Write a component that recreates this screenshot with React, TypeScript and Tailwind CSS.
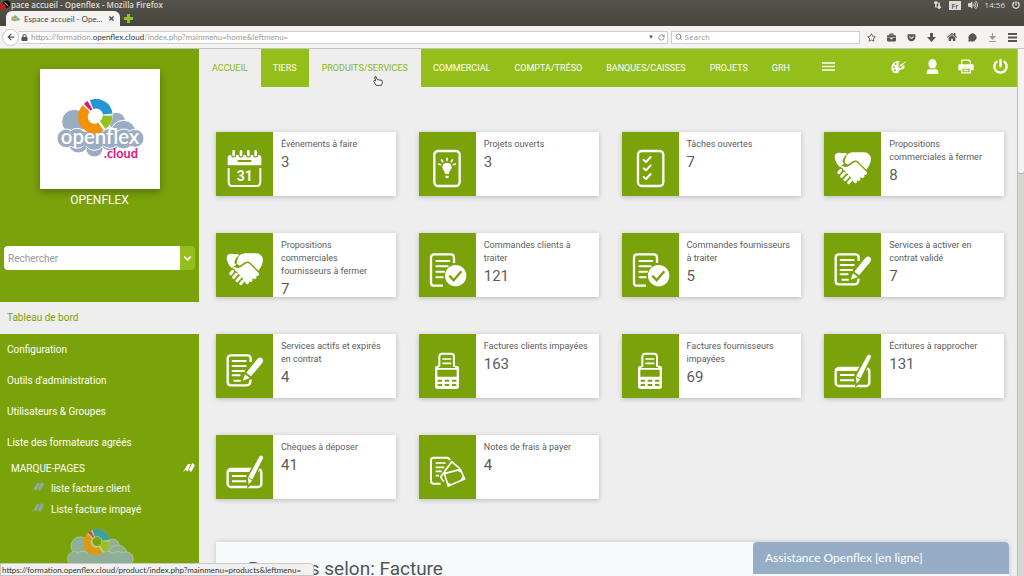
import React from 'react';
import {
  FaArrowLeft,
  FaBriefcase,
  FaGetPocket,
  FaHome,
  FaLock,
  FaPowerOff,
  FaRegStar,
  FaVolumeUp,
} from 'react-icons/fa';
import { ChevronDown, MessageCircle, RotateCw, Search, X } from 'lucide-react';

type IconName = 'calendar' | 'project' | 'tasks' | 'handshake' | 'order' | 'contract' | 'invoice' | 'cheque' | 'expense';

type Stat = { icon: IconName; label: string; value: number };

const stats: Stat[] = [
  { icon: 'calendar', label: 'Événements à faire', value: 3 },
  { icon: 'project', label: 'Projets ouverts', value: 3 },
  { icon: 'tasks', label: 'Tâches ouvertes', value: 7 },
  { icon: 'handshake', label: 'Propositions commerciales à fermer', value: 8 },
  { icon: 'handshake', label: 'Propositions commerciales fournisseurs à fermer', value: 7 },
  { icon: 'order', label: 'Commandes clients à traiter', value: 121 },
  { icon: 'order', label: 'Commandes fournisseurs à traiter', value: 5 },
  { icon: 'contract', label: 'Services à activer en contrat validé', value: 7 },
  { icon: 'contract', label: 'Services actifs et expirés en contrat', value: 4 },
  { icon: 'invoice', label: 'Factures clients impayées', value: 163 },
  { icon: 'invoice', label: 'Factures fournisseurs impayées', value: 69 },
  { icon: 'cheque', label: 'Écritures à rapprocher', value: 131 },
  { icon: 'cheque', label: 'Chèques à déposer', value: 41 },
  { icon: 'expense', label: 'Notes de frais à payer', value: 4 },
];

const topMenu = [
  { label: 'ACCUEIL', active: true },
  { label: 'TIERS', active: false },
  { label: 'PRODUITS/SERVICES', active: true },
  { label: 'COMMERCIAL', active: false },
  { label: 'COMPTA/TRÉSO', active: false },
  { label: 'BANQUES/CAISSES', active: false },
  { label: 'PROJETS', active: false },
  { label: 'GRH', active: false },
];

const sideMenu = ['Tableau de bord', 'Configuration', "Outils d'administration", 'Utilisateurs & Groupes', 'Liste des formateurs agréés'];

const GREEN = '#7aa20a';

const drawings: Record<IconName, React.ReactNode> = {
  calendar: (
    <>
      <path d="M35 100V78q0-9 9-9h83q9 0 9 9v22z" fill="#fff" />
      <g stroke={GREEN} strokeWidth="15" strokeLinecap="round">
        <path d="M53 60v9M75 60v9M97 60v9M119 60v9" />
      </g>
      <g stroke="#fff" strokeWidth="8" strokeLinecap="round">
        <path d="M53 58v11M75 58v11M97 58v11M119 58v11" />
      </g>
      <path d="M65 87h41" stroke={GREEN} strokeWidth="6" />
      <path d="M38 108v43q0 11 11 11h73q11 0 11-11v-43" fill="none" stroke="#fff" strokeWidth="6" />
      <text x="86" y="146" textAnchor="middle" fill="#fff" fontSize="42" fontWeight="700" fontFamily="Roboto, sans-serif">
        31
      </text>
    </>
  ),
  project: (
    <>
      <rect x="46" y="57" width="76" height="105" rx="11" fill="none" stroke="#fff" strokeWidth="7" />
      <path d="M84 92c-9 0-14 6-14 13 0 8 7 11 8 21h12c1-10 8-13 8-21 0-7-5-13-14-13z" fill="#fff" />
      <path d="M79 131h10v4q0 4-5 4t-5-4z" fill="#fff" />
      <path d="M84 79v6M68 84l3 5M100 84l-3 5M59 96l6 2M109 96l-6 2" stroke="#fff" strokeWidth="5" strokeLinecap="round" />
    </>
  ),
  tasks: (
    <g fill="none" stroke="#fff" strokeLinecap="round" strokeLinejoin="round">
      <rect x="48" y="57" width="76" height="105" rx="11" strokeWidth="7" />
      <path d="M65 84l7 6 14-15M65 109l7 6 14-15M65 135l7 6 14-15" strokeWidth="6" />
    </g>
  ),
  handshake: (
    <>
      <path d="M32 77q-1-14 12-15c6 0 14 2 18 1l8 2q-11 8-14 20-2 8 5 9l-13 12q-13-12-16-29z" fill="#fff" />
      <path
        d="M72 66q6-5 14-5h33q9 0 14 4 8 6 8 15-1 17-14 33L103 89q-8-7-17-1l-12 9q-8 2-12-6 2-18 10-25z"
        fill="#fff"
      />
      <path
        d="M78 100l13-9q5-3 10 2l27 27q3 5-1 8-4 2-7-1 4 6-1 10-4 3-9-1l-2-2q4 8-1 12-4 3-8-1l-4-5 4 5q2 6-3 8-4 2-7-2l-8-11q0-7-7-8-1-8-8-9-1-8-8-9-1-7-8-8l5-5q11 8 23-1z"
        fill="#fff"
      />
      <path d="M44 122l6-7M53 133l8-9M63 143l8-9M74 152l6-7" stroke="#fff" strokeWidth="9" strokeLinecap="round" />
    </>
  ),
  order: (
    <>
      <path d="M72 158H45q-9 0-9-9V74q0-10 10-10h49q10 0 10 10v16" fill="none" stroke="#fff" strokeWidth="7" />
      <path d="M52 84h39M52 100h34M52 116h23M52 133h19" stroke="#fff" strokeWidth="6" strokeLinecap="round" />
      <circle cx="110" cy="128" r="32" fill="#fff" />
      <path d="M91 128l13 14 23-27" fill="none" stroke={GREEN} strokeWidth="7" />
    </>
  ),
  contract: (
    <>
      <path
        d="M104 84V74q0-10-10-10H45q-10 0-10 10v70q0 10 10 10h48q10 0 11-17"
        fill="none"
        stroke="#fff"
        strokeWidth="7"
      />
      <path d="M50 81h39M50 96h39M50 111h34M50 124h21M55 140h17" stroke="#fff" strokeWidth="6" strokeLinecap="round" />
      <path d="M91 116l31-39q8-10 16-4 7 6-1 16l-32 38z" fill="#fff" />
      <path d="M87 121l14 11-21 8z" fill="#fff" />
    </>
  ),
  invoice: (
    <>
      <path d="M61 98V68q0-9 9-9h26q9 0 9 9v30" fill="none" stroke="#fff" strokeWidth="6" />
      <path d="M70 75h27M70 88h27" stroke="#fff" strokeWidth="5" />
      <path d="M48 103q0-8 8-8h3v7h49v-7h4q8 0 8 8v54q0 8-8 8H56q-8 0-8-8z" fill="#fff" />
      <path d="M55 107h58v21H55zM56 137h13v6H56zM77 137h14v6H77zM99 137h13v6H99zM56 150h13v6H56zM77 150h14v6H77zM99 150h13v6H99z" fill={GREEN} />
    </>
  ),
  cheque: (
    <>
      <rect x="35" y="102" width="101" height="54" rx="10" fill="none" stroke="#fff" strokeWidth="7" />
      <path d="M35 102h93v9H35z" fill="#fff" />
      <path d="M48 123h43M48 139h43" stroke="#fff" strokeWidth="6" />
      <path d="M93 128l34-63q5-9 13-4 6 4 2 12l-34 68-12 14z" fill="#fff" stroke={GREEN} strokeWidth="5" />
      <path d="M97 128l12 7" stroke={GREEN} strokeWidth="3" />
    </>
  ),
  expense: (
    <g fill="none" stroke="#fff" strokeLinejoin="round">
      <path d="M65 146H44q-8 0-8-8V76q0-8 8-8h40q8 0 8 8" strokeWidth="6" />
      <path d="M50 84h30M50 97h26M50 109h18M50 122h10" strokeWidth="5" />
      <path d="M74 140L65 126 98 80 122 100" strokeWidth="5" />
      <path d="M76 116L124 103 137 132 88 153z" strokeWidth="5" />
      <path d="M74 112l14-1-10 10zM124 101l3 12-13-6zM139 133l-15 3 7-13zM86 155l-2-13 15 6z" fill="#fff" stroke="none" />
    </g>
  ),
};

const StatCard: React.FC<{ stat: Stat }> = ({ stat }) => (
  <a href="#" className="flex h-16 overflow-hidden bg-white shadow-[0_1px_5px_rgba(0,0,0,0.22)]">
    <svg viewBox="0 0 171 192" className="h-16 w-[57px] shrink-0 bg-[#7aa20a]">
      {drawings[stat.icon]}
    </svg>
    <div className="min-w-0 flex-1 px-2 pt-[6px] text-[#5c5c5c]">
      <p className="text-[9px] leading-[13px]">{stat.label}</p>
      <p className="text-[15px] leading-[22px]">{stat.value}</p>
    </div>
  </a>
);

const CloudLogo: React.FC<{ full?: boolean; className?: string }> = ({ full, className }) => (
  <svg viewBox="0 0 270 180" className={className}>
    <g fill={full ? '#9badc4' : '#8fae9a'} stroke={full ? '#fff' : '#b9cf8e'} strokeWidth="3">
      <circle cx="185" cy="66" r="26" />
      <circle cx="57" cy="68" r="37" />
      <circle cx="118" cy="148" r="26" />
      <circle cx="70" cy="132" r="30" />
      <circle cx="165" cy="126" r="30" />
      <circle cx="205" cy="102" r="38" />
      <circle cx="34" cy="118" r="28" />
      <circle cx="66" cy="118" r="30" />
      <circle cx="118" cy="122" r="32" />
      <circle cx="165" cy="118" r="30" />
      <circle cx="206" cy="120" r="30" />
      <circle cx="240" cy="118" r="27" />
    </g>
    <path d="M20 98h232v42H20z" fill={full ? '#9badc4' : '#8fae9a'} />
    <g transform="translate(-3 -4)">
      <circle cx="126" cy="54" r="50" fill={full ? '#fff' : '#b9cf8e'} />
      <g fill="none" strokeWidth="29">
        <path d="M113 21A35 35 0 0 1 161 49" stroke={full ? '#2397d4' : '#3f9fa0'} />
        <path d="M161 54A35 35 0 0 1 146 82" stroke="#94c11f" />
        <path d="M141 87A35 35 0 0 1 97 33" stroke={full ? '#f39200' : '#dc9a12'} />
        <path d="M100 29A35 35 0 0 1 108 23" stroke={full ? '#e2127b' : '#cf4a62'} />
      </g>
      <circle cx="126" cy="54" r="18" fill={full ? '#fff' : GREEN} />
    </g>
    {full && (
      <>
        <text x="135" y="136" textAnchor="middle" fill="#fff" fontSize="61" fontWeight="600" fontFamily="Lato, sans-serif">
          openflex
        </text>
        <text x="147" y="176" fill="#e2127b" fontSize="38" fontWeight="700" fontFamily="Lato, sans-serif">
          .cloud
        </text>
      </>
    )}
  </svg>
);

const BookmarkIcon: React.FC<{ className: string }> = ({ className }) => (
  <svg viewBox="0 0 36 30" className={className} fill="currentColor">
    <path d="M15 3h8L13 26l-5-5-8 5zM27 1q8 0 8 8L24 28l-4-7-5 3 10-19z" />
  </svg>
);

const BrowserBar: React.FC = () => (
  <header className="shrink-0 bg-linear-to-b from-[#55534a] to-[#3a3833] font-['Open_Sans',sans-serif] text-[#dfdbd2]">
    <div className="flex h-[10px] items-center justify-between pr-1 text-[8px] leading-[10px]">
      <div className="flex items-center whitespace-nowrap font-semibold">
        <svg viewBox="0 0 12 10" className="h-[10px] w-[11px]">
          <circle cx="7" cy="4" r="4" fill="#111" />
          <circle cx="3" cy="7" r="3" fill="#e01010" />
          <path d="M5 2l4 4" stroke="#ddd" />
        </svg>
        pace accueil - Openflex - Mozilla Firefox
      </div>
      <div className="flex items-center gap-[7px]">
        <svg viewBox="0 0 10 10" className="h-2 w-[9px]" fill="none" stroke="currentColor" strokeWidth="2">
          <path d="M3 8V1M1 3l2-2 2 2M7 2v7M5 7l2 2 2-2" />
        </svg>
        <span className="bg-[#dfdbd2] px-[2px] leading-[9px] text-[#3c3b37]">Fr</span>
        <FaVolumeUp className="size-[10px]" />
        <span>14:56</span>
        <FaPowerOff className="size-2" />
      </div>
    </div>
    <div className="flex h-4 items-center gap-1 pl-[6px] pt-px">
      <div className="flex h-[15px] w-[114px] items-center gap-1 rounded-t-md bg-[#f4f3f2] px-[5px] font-[Lato,sans-serif] text-[8px] text-[#444]">
        <CloudLogo className="h-[7px] w-[9px] shrink-0" />
        <span className="flex-1 whitespace-nowrap">Espace accueil - Ope...</span>
        <button aria-label="Fermer l'onglet">
          <X className="size-[7px]" strokeWidth={4} />
        </button>
      </div>
      <button aria-label="Nouvel onglet">
        <svg viewBox="0 0 9 9" className="size-[9px]" fill="#8fc21f">
          <path d="M3 0h3v3h3v3H6v3H3V6H0V3h3z" />
        </svg>
      </button>
    </div>
    <div className="flex h-[23px] items-center border-b border-[#c4c3c0] bg-[#f4f3f2] pl-[2px] pr-[7px] text-[8px] text-[#555]">
      <button aria-label="Précédent" className="flex size-[17px] items-center justify-center rounded-full border border-[#c8c8c8] bg-white">
        <FaArrowLeft className="size-2" />
      </button>
      <div className="flex h-[13px] flex-1 items-center border border-l-0 border-[#cfcecb] bg-white pl-[2px] pr-[2px]">
        <FaLock className="size-[7px]" />
        <span className="ml-[3px] flex-1 whitespace-nowrap font-[Lato,sans-serif] text-[#999]">
          https://formation.<span className="text-[#333]">openflex.cloud</span>/index.php?mainmenu=home&amp;leftmenu=
        </span>
        <span className="text-[6px]">▼</span>
        <RotateCw className="ml-1 size-[7px]" />
      </div>
      <label className="ml-[3px] flex h-[13px] w-[189px] items-center gap-[2px] border border-[#cfcecb] bg-white pl-[3px]">
        <Search className="size-2" />
        <input aria-label="Search" placeholder="Search" className="w-full bg-transparent outline-none placeholder:text-[#999]" />
      </label>
      <div className="ml-[7px] flex items-center gap-[11px]">
        <FaRegStar className="size-[9px]" />
        <FaBriefcase className="size-[9px]" />
        <FaGetPocket className="size-[9px]" />
        <svg viewBox="0 0 9 9" className="size-[9px]" fill="currentColor">
          <path d="M3 0h3v4h3L4.500 9 0 4h3z" />
        </svg>
        <FaHome className="size-[10px]" />
        <MessageCircle className="size-[9px]" fill="currentColor" />
        <svg viewBox="0 0 9 9" className="size-[9px]" fill="#999">
          <path d="M4 0h1v3h3L4.500 7 1 3h3zM1 8h7v1H1z" />
        </svg>
        <svg viewBox="0 0 9 9" className="size-[9px]" stroke="currentColor" strokeWidth="2">
          <path d="M0 1h9M0 4.500h9M0 8h9" />
        </svg>
      </div>
    </div>
  </header>
);

const Sidebar: React.FC = () => (
  <aside className="flex w-[199px] shrink-0 flex-col bg-[#7aa20a] text-[10px] text-white">
    <div className="mt-5 flex size-[120px] shrink-0 items-center justify-center self-center bg-white shadow-[0_3px_8px_rgba(0,0,0,0.3)]">
      <CloudLogo full className="w-[90px]" />
    </div>
    <p className="text-center text-[12px] leading-[22px]">OPENFLEX</p>
    <form className="mx-1 mt-[35px] flex h-6 shrink-0">
      <input
        aria-label="Rechercher"
        placeholder="Rechercher"
        className="min-w-0 flex-1 rounded-l-sm bg-white px-1 text-[10px] text-[#555] outline-none placeholder:text-[#999]"
      />
      <button aria-label="Choisir" type="button" className="flex w-[15px] items-center justify-center rounded-r-sm bg-[#94be1a]">
        <ChevronDown className="size-[11px]" strokeWidth={4} />
      </button>
    </form>
    <nav className="mt-8 flex flex-col">
      {sideMenu.map((label, i) => (
        <a
          key={label}
          href="#"
          className={i === 0 ? 'h-8 bg-[#eee] px-[7px] leading-8 text-[#7aa20a]' : 'h-[31px] px-[7px] leading-8'}
        >
          {label}
        </a>
      ))}
    </nav>
    <div className="flex h-5 items-center justify-between pl-[11px] pr-1">
      MARQUE-PAGES
      <BookmarkIcon className="h-[10px] w-3" />
    </div>
    {['liste facture client', 'Liste facture impayé'].map((label) => (
      <a key={label} href="#" className="flex h-[21px] items-center gap-[7px] pl-8">
        <BookmarkIcon className="mb-1 h-[10px] w-3 text-[#8fa9a0]" />
        {label}
      </a>
    ))}
    <CloudLogo className="mt-[9px] w-[68px] shrink-0 self-center" />
  </aside>
);

const TopNav: React.FC = () => (
  <nav className="flex h-[38px] shrink-0 items-center bg-[#94be1a] text-[9px] text-white">
    {topMenu.map(({ label, active }) => (
      <a
        key={label}
        href="#"
        className={
          active
            ? 'h-full whitespace-nowrap bg-[#eee] px-[13px] leading-[38px] text-[#8ab51a]'
            : 'h-full whitespace-nowrap px-3 leading-[38px]'
        }
      >
        {label}
      </a>
    ))}
    <button aria-label="Menu" className="ml-5 pb-[3px]">
      <svg viewBox="0 0 13 9" className="h-[9px] w-[13px]" stroke="currentColor" strokeWidth="1.400">
        <path d="M0 1h13M0 4.500h13M0 8h13" />
      </svg>
    </button>
    <div className="ml-auto flex items-center gap-[19px] pb-[3px] pr-[9px]">
      <button aria-label="Thème">
        <svg viewBox="0 0 48 42" className="h-[14px] w-4" fill="currentColor">
          <path d="M26 3C14 1 1 9 1 23c0 12 9 18 17 17 7-1 4-8 9-11 5-2 10 1 13-5 1-3 0-7-1-9L28 25l-7-3z" />
          <path d="M47 2L28 14l-4 7 8-3z" />
          <g fill="#94be1a">
            <circle cx="9" cy="21" r="3" />
            <circle cx="12" cy="31" r="3" />
            <circle cx="14" cy="12" r="3" />
            <circle cx="22" cy="9" r="2" />
          </g>
        </svg>
      </button>
      <button aria-label="Utilisateur">
        <svg viewBox="0 0 36 44" className="h-[15px] w-[13px]" fill="currentColor">
          <ellipse cx="18" cy="14" rx="12" ry="14" />
          <path d="M1 44v-6q0-7 10-9 7 4 14 0 10 2 10 9v6z" />
        </svg>
      </button>
      <button aria-label="Imprimer">
        <svg viewBox="0 0 48 44" className="h-[15px] w-4" fill="none" stroke="currentColor" strokeWidth="4">
          <path d="M11 16V3h22l4 4v9" />
          <path d="M5 15h38q4 0 4 4v14H37v-7H11v7H1V19q0-4 4-4z" fill="currentColor" stroke="none" />
          <path d="M11 27h26v14H11zM17 34h14" />
        </svg>
      </button>
      <button aria-label="Déconnexion">
        <FaPowerOff className="size-[15px]" />
      </button>
    </div>
  </nav>
);

export default function App() {
  return (
    <div className="relative flex h-screen flex-col overflow-hidden bg-[#eee] font-[Roboto,sans-serif]">
      <BrowserBar />
      <div className="flex min-h-0 flex-1 overflow-hidden">
        <Sidebar />
        <main className="flex min-w-0 flex-1 flex-col">
          <TopNav />
          <section className="grid grid-cols-4 gap-x-[23px] gap-y-[37px] pl-[17px] pr-[13px] pt-[45px]">
            {stats.map((stat) => (
              <StatCard key={stat.label} stat={stat} />
            ))}
          </section>
          <section className="ml-[17px] mr-2 mt-[43px] h-24 shrink-0 bg-[#f6fafa] px-8 pt-4 shadow-[0_0_5px_rgba(0,0,0,0.18)]">
            <h2 className="text-[19px] leading-[22px] text-[#555]">Revenus selon: Facture</h2>
          </section>
        </main>
        <div className="w-[7px] shrink-0 border-l border-[#bbb] bg-[#d9d7d4]">
          <div className="h-[125px] rounded-b-sm border-b border-[#aaa] bg-[#f4f3f2]" />
        </div>
      </div>
      <button className="absolute bottom-[2px] right-[15px] h-8 w-1/4 rounded-t-sm bg-[#95adc5] px-3 text-left font-[Lato,sans-serif] text-[12px] text-white">
        Assistance Openflex [en ligne]
      </button>
      <div className="absolute bottom-0 left-0 h-[13px] whitespace-nowrap rounded-tr-sm border border-[#c8c8c8] bg-[#f2f1f0] pl-px pr-3 font-[Lato,sans-serif] text-[8px] leading-[12px] text-[#333]">
        https://formation.openflex.cloud/product/index.php?mainmenu=products&amp;leftmenu=
      </div>
      <svg viewBox="0 0 30 30" className="absolute left-[373px] top-[76px] size-[10px]" fill="#fff" stroke="#444" strokeWidth="3">
        <path d="M5 3l4-1 4 9 14 2 1 9-3 6H9L2 16l2-3 4 2z" />
      </svg>
    </div>
  );
}
